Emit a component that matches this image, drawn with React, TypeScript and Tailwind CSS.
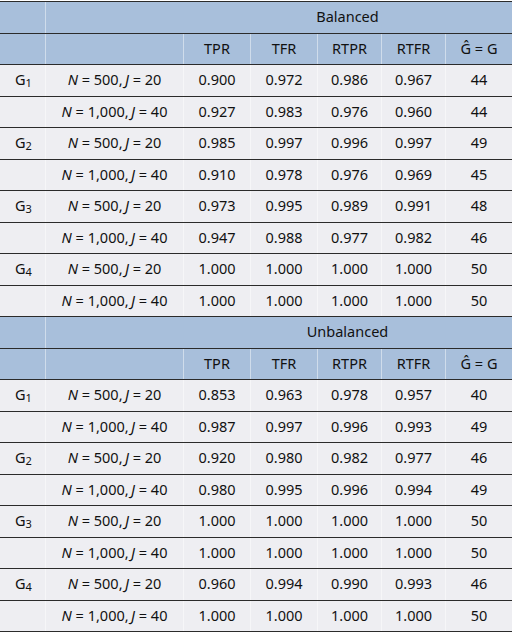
import React from 'react';

type Row = { g?: number; n: string; j: string; vals: string[] };

const balanced: Row[] = [
  { g: 1, n: '500', j: '20', vals: ['0.900', '0.972', '0.986', '0.967', '44'] },
  { n: '1,000', j: '40', vals: ['0.927', '0.983', '0.976', '0.960', '44'] },
  { g: 2, n: '500', j: '20', vals: ['0.985', '0.997', '0.996', '0.997', '49'] },
  { n: '1,000', j: '40', vals: ['0.910', '0.978', '0.976', '0.969', '45'] },
  { g: 3, n: '500', j: '20', vals: ['0.973', '0.995', '0.989', '0.991', '48'] },
  { n: '1,000', j: '40', vals: ['0.947', '0.988', '0.977', '0.982', '46'] },
  { g: 4, n: '500', j: '20', vals: ['1.000', '1.000', '1.000', '1.000', '50'] },
  { n: '1,000', j: '40', vals: ['1.000', '1.000', '1.000', '1.000', '50'] },
];

const unbalanced: Row[] = [
  { g: 1, n: '500', j: '20', vals: ['0.853', '0.963', '0.978', '0.957', '40'] },
  { n: '1,000', j: '40', vals: ['0.987', '0.997', '0.996', '0.993', '49'] },
  { g: 2, n: '500', j: '20', vals: ['0.920', '0.980', '0.982', '0.977', '46'] },
  { n: '1,000', j: '40', vals: ['0.980', '0.995', '0.996', '0.994', '49'] },
  { g: 3, n: '500', j: '20', vals: ['1.000', '1.000', '1.000', '1.000', '50'] },
  { n: '1,000', j: '40', vals: ['1.000', '1.000', '1.000', '1.000', '50'] },
  { g: 4, n: '500', j: '20', vals: ['0.960', '0.994', '0.990', '0.993', '46'] },
  { n: '1,000', j: '40', vals: ['1.000', '1.000', '1.000', '1.000', '50'] },
];

const rowCls =
  'grid grid-cols-[45px_138px_67px_67px_64px_64px_67px] h-[31.5px] border-b border-[#2b2b2b]';
const cell = 'flex items-center justify-center border-l border-white/45';

function Section({ title, rows }: { title: string; rows: Row[] }) {
  return (
    <>
      <div className={`${rowCls} bg-[#a8bfdb]`}>
        <div />
        <div className={cell} />
        <div className="col-span-5 flex items-center justify-center">{title}</div>
      </div>
      <div className={`${rowCls} bg-[#a8bfdb]`}>
        <div />
        <div className={cell} />
        <div className={cell}>TPR</div>
        <div className={cell}>TFR</div>
        <div className={cell}>RTPR</div>
        <div className={cell}>RTFR</div>
        <div className={cell}>Ĝ = G</div>
      </div>
      {rows.map((r, i) => (
        <div key={i} className={`${rowCls} bg-[#eeeef2]`}>
          <div className="flex items-center pl-[15px]">
            {r.g && (
              <span>
                G<sub className="text-[11px] -bottom-[0.15em]">{r.g}</sub>
              </span>
            )}
          </div>
          <div className={cell}>
            <span>
              <i>N</i> = {r.n},{'\u2009'}
              <i>J</i> = {r.j}
            </span>
          </div>
          {r.vals.map((v, k) => (
            <div key={k} className={cell}>
              {v}
            </div>
          ))}
        </div>
      ))}
    </>
  );
}

export default function App() {
  return (
    <div className="w-[512px] bg-white pt-px font-['Noto_Sans',sans-serif] text-[14.5px] text-[#111]">
      <div className="border-t border-[#2b2b2b]">
        <Section title="Balanced" rows={balanced} />
        <Section title="Unbalanced" rows={unbalanced} />
      </div>
    </div>
  );
}
